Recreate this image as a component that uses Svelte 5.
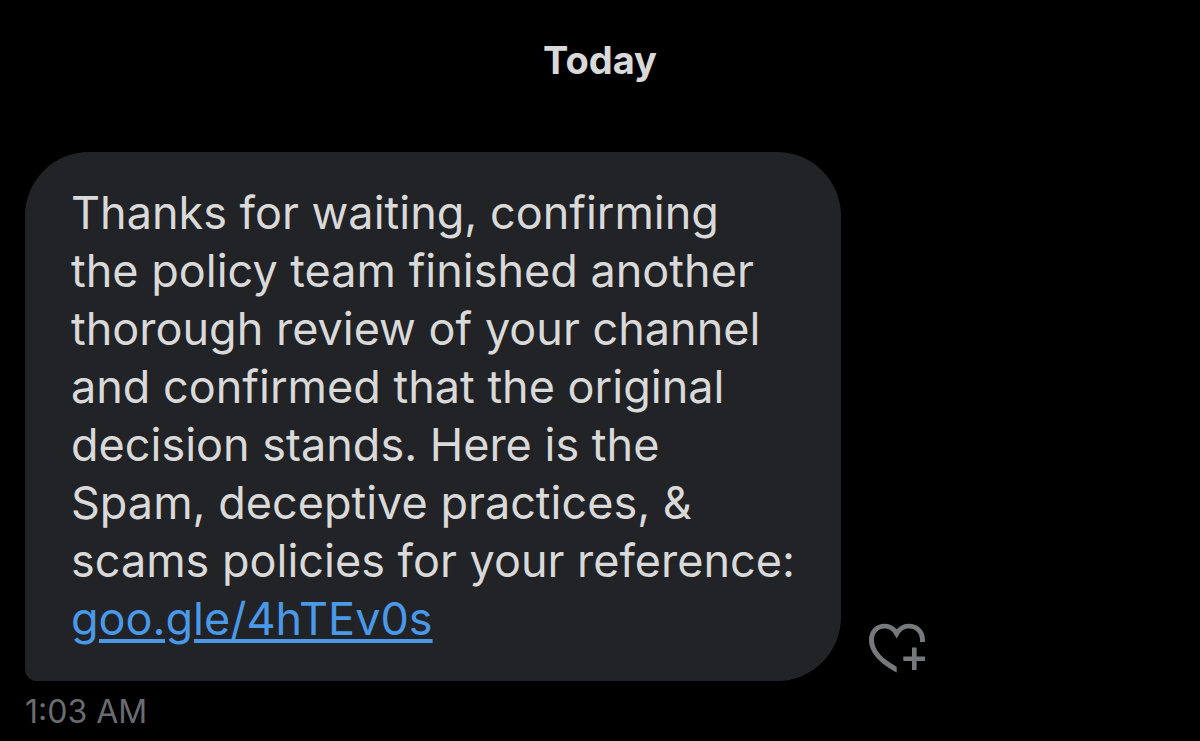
<script>
    let day = "Today";

    let message = {
        lines: [
            "Thanks for waiting, confirming",
            "the policy team finished another",
            "thorough review of your channel",
            "and confirmed that the original",
            "decision stands. Here is the",
            "Spam, deceptive practices, &",
            "scams policies for your reference:",
        ],
        link: "goo.gle/4hTEv0s",
        time: "1:03 AM",
    };

    let liked = false;

    function toggleLike() {
        liked = !liked;
    }
</script>

<main class="chat">
    <h1 class="chat__day">{day}</h1>

    <div class="message">
        <div class="message__row">
            <p class="message__bubble">
                {#each message.lines as line}
                    {line}<br />
                {/each}
                <a href="https://{message.link}">{message.link}</a>
            </p>
            <button class="like" aria-label="Add reaction" aria-pressed={liked} on:click={toggleLike}>
                <svg viewBox="0 0 60 52" width="60" height="52" aria-hidden="true">
                    <path
                        d="M28.700 49.500C13 41 1 30.500 1 17C1 7 8 .7 16.500 .7C21.500 .7 25.700 2.700 28.700 6.200C31.700 2.700 36 .7 41 .7C50 .7 57 7 57 17V19H52V17C52 10 47.500 5.500 41 5.500C36 5.500 33 8 30.800 12L28.700 15.500L26.600 12C24.400 8 21.500 5.500 16.500 5.500C10.500 5.500 6 10 6 17C6 27.500 15 36 28.700 43.800Z"
                        fill="currentColor"
                    />
                    <path d="M46.300 24.500V47M35.300 35.800H57" fill="none" stroke="currentColor" stroke-width="4.600" />
                </svg>
            </button>
        </div>
        <time class="message__time">{message.time}</time>
    </div>
</main>

<style>
    :global(body) {
        background: #000;
    }

    .chat {
        padding: 36px 25px 0;
        font-family: Inter, "Liberation Sans", sans-serif;
        color: #d9d9d9;
    }

    .chat__day {
        margin: 0 0 68px;
        font-size: 38px;
        line-height: 48px;
        font-weight: 700;
        text-align: center;
    }

    .message__row {
        display: flex;
        align-items: flex-end;
        gap: 27px;
    }

    .message__bubble {
        box-sizing: border-box;
        flex: 0 1 816px;
        margin: 0;
        padding: 32px 0 33px 46px;
        border-radius: 64px 64px 64px 12px;
        background: #222327;
        font-size: 45px;
        line-height: 58px;
        white-space: nowrap;
    }

    .message__bubble a {
        color: #4a99e9;
        text-decoration-thickness: 4px;
        text-underline-offset: 4px;
    }

    .like {
        margin: 0 0 6px;
        padding: 0;
        border: none;
        background: none;
        color: #77787c;
        cursor: pointer;
    }

    .like svg {
        display: block;
    }

    .message__time {
        display: block;
        margin-top: 10px;
        font-size: 32px;
        line-height: 42px;
        color: #6b6c70;
    }
</style>
